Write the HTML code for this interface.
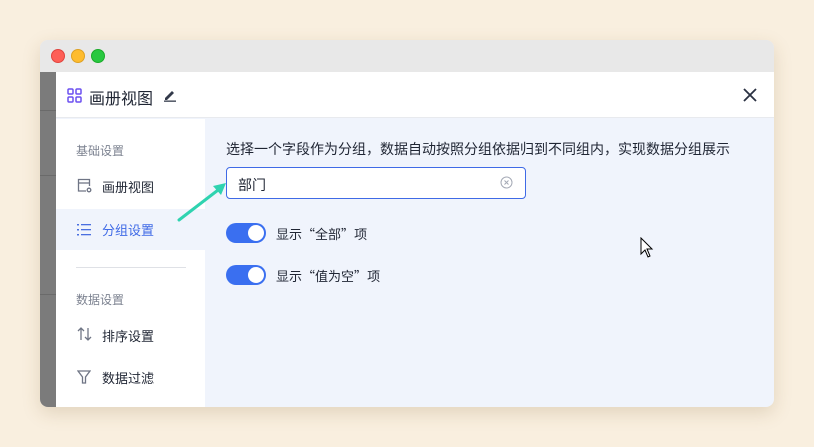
<!DOCTYPE html>
<html><head><meta charset="utf-8"><style>
*{margin:0;padding:0;box-sizing:border-box}
body{width:814px;height:447px;background:#f9efdf;font-family:"Liberation Sans","Noto Sans CJK SC",sans-serif;position:relative;overflow:hidden}
.win{position:absolute;left:40px;top:40px;width:734px;height:367px;border-radius:8px;overflow:hidden;background:#f0f4fc;box-shadow:0 6px 18px rgba(120,90,40,.18)}
.tb{position:absolute;left:0;top:0;width:734px;height:32px;background:#e8e8e8}
.dot{position:absolute;top:9px;width:14px;height:14px;border-radius:50%}
.strip{position:absolute;left:0;top:32px;width:16px;height:335px;background:#7b7b7b}
.strip i{position:absolute;left:0;width:16px;height:1px;background:#6a6a6a}
.hdr{position:absolute;left:16px;top:32px;width:718px;height:46px;background:#fff;border-bottom:1px solid #e8eaee}
.side{position:absolute;left:16px;top:79px;width:149px;height:288px;background:#fff}
.t{position:absolute;white-space:nowrap}
.sec{font-size:12px;color:#7c8290}
.item{font-size:13px;color:#1f2533}
.tog{position:absolute;width:40px;height:20px;border-radius:10px;background:#3a6ff0}
.tog::after{content:"";position:absolute;right:2px;top:2px;width:16px;height:16px;border-radius:50%;background:#fff}
.q{font-family:"Noto Sans CJK SC",sans-serif}
</style></head><body>
<div class="win">
 <div class="tb"></div>
 <div class="dot" style="left:11px;background:#fe5f57;border:1px solid #e0443e"></div>
 <div class="dot" style="left:31px;background:#febc2e;border:1px solid #dea123"></div>
 <div class="dot" style="left:51px;background:#28c840;border:1px solid #1aab29"></div>
 <div class="strip"><i style="top:38px"></i><i style="top:103px"></i><i style="top:222px"></i></div>
 <div class="hdr">
  <svg style="position:absolute;left:11px;top:16px" width="15" height="15" viewBox="0 0 15 15" fill="none" stroke="#6b4ff0" stroke-width="1.5"><rect x="1" y="1" width="5" height="5" rx="1"/><rect x="9" y="1" width="5" height="5" rx="1"/><rect x="1" y="9" width="5" height="5" rx="1"/><rect x="9" y="9" width="5" height="5" rx="1"/></svg>
  <div class="t" style="left:33px;top:13px;font-size:16px;color:#1f2533">画册视图</div>
  <svg style="position:absolute;left:107px;top:16px" width="14" height="14" viewBox="0 0 14 14"><path d="M2 10 L9 3 L11 5 L4 12 L2 12Z" fill="#333a4a"/><rect x="1" y="12.5" width="12" height="1.3" fill="#333a4a"/></svg>
  <svg style="position:absolute;left:687px;top:16px" width="14" height="14" viewBox="0 0 14 14" stroke="#2a3142" stroke-width="1.8"><path d="M1 1L13 13M13 1L1 13"/></svg>
 </div>
 <div class="side">
  <div class="t sec" style="left:20px;top:23px">基础设置</div>
  <svg style="position:absolute;left:21px;top:59px" width="15" height="15" viewBox="0 0 15 15" fill="none" stroke="#6f7585" stroke-width="1.3"><path d="M9 13H1.5V1.5h11V8"/><path d="M1.5 5h11"/><circle cx="12" cy="12" r="1.8"/></svg>
  <div class="t item" style="left:46px;top:58px">画册视图</div>
  <div style="position:absolute;left:0;top:90px;width:149px;height:41px;background:#f0f4fc"></div>
  <svg style="position:absolute;left:21px;top:104px" width="14" height="13" viewBox="0 0 14 13" fill="#4a6fe0"><rect x="0" y="1" width="2" height="1.5"/><rect x="4" y="1" width="10" height="1.3"/><rect x="0" y="6" width="2" height="1.5"/><rect x="4" y="6" width="10" height="1.3"/><rect x="0" y="11" width="2" height="1.5"/><rect x="4" y="11" width="10" height="1.3"/></svg>
  <div class="t item" style="left:46px;top:101px;color:#3f6ae6">分组设置</div>
  <div style="position:absolute;left:20px;top:148px;width:110px;height:1px;background:#dfe1e6"></div>
  <div class="t sec" style="left:20px;top:172px">数据设置</div>
  <svg style="position:absolute;left:21px;top:208px" width="15" height="14" viewBox="0 0 15 14" fill="none" stroke="#6f7585" stroke-width="1.3"><path d="M4 13V1M1 4l3-3 3 3M11 1v12M8 10l3 3 3-3"/></svg>
  <div class="t item" style="left:46px;top:207px">排序设置</div>
  <svg style="position:absolute;left:21px;top:251px" width="14" height="14" viewBox="0 0 14 14" fill="none" stroke="#6f7585" stroke-width="1.3"><path d="M1 1h12L8.5 7v6h-3V7Z"/></svg>
  <div class="t item" style="left:46px;top:249px">数据过滤</div>
 </div>
 <div class="t" style="left:186px;top:99px;font-size:14px;color:#1f2533">选择一个字段作为分组，数据自动按照分组依据归到不同组内，实现数据分组展示</div>
 <div style="position:absolute;left:186px;top:127px;width:300px;height:32px;background:#fff;border:1px solid #3f6ae6;border-radius:4px"></div>
 <div class="t" style="left:198px;top:135px;font-size:14px;color:#1f2533">部门</div>
 <svg style="position:absolute;left:460px;top:136px" width="13" height="13" viewBox="0 0 13 13" fill="none" stroke="#a4a9b5" stroke-width="1"><circle cx="6.5" cy="6.5" r="5.5"/><path d="M4.5 4.5l4 4M8.5 4.5l-4 4"/></svg>
 <div class="tog" style="left:186px;top:183px"></div>
 <div class="t" style="left:236px;top:184px;font-size:13px;color:#1f2533">显示<span class="q">“</span>全部<span class="q">”</span>项</div>
 <div class="tog" style="left:186px;top:225px"></div>
 <div class="t" style="left:236px;top:226px;font-size:13px;color:#1f2533">显示<span class="q">“</span>值为空<span class="q">”</span>项</div>
 <svg style="position:absolute;left:600px;top:197px" width="14" height="22" viewBox="0 0 14 22"><path d="M1 1V17L5 13L8 20L10 19L7 12H12Z" fill="#fff" stroke="#000" stroke-width="1"/></svg>
</div>
<svg style="position:absolute;left:170px;top:176px" width="60" height="50" viewBox="0 0 60 50"><path d="M9 44L52 11" stroke="#2fd3b0" stroke-width="3" stroke-linecap="round"/><path d="M56 7L43 10L51 19Z" fill="#2fd3b0"/></svg>
</body></html>
